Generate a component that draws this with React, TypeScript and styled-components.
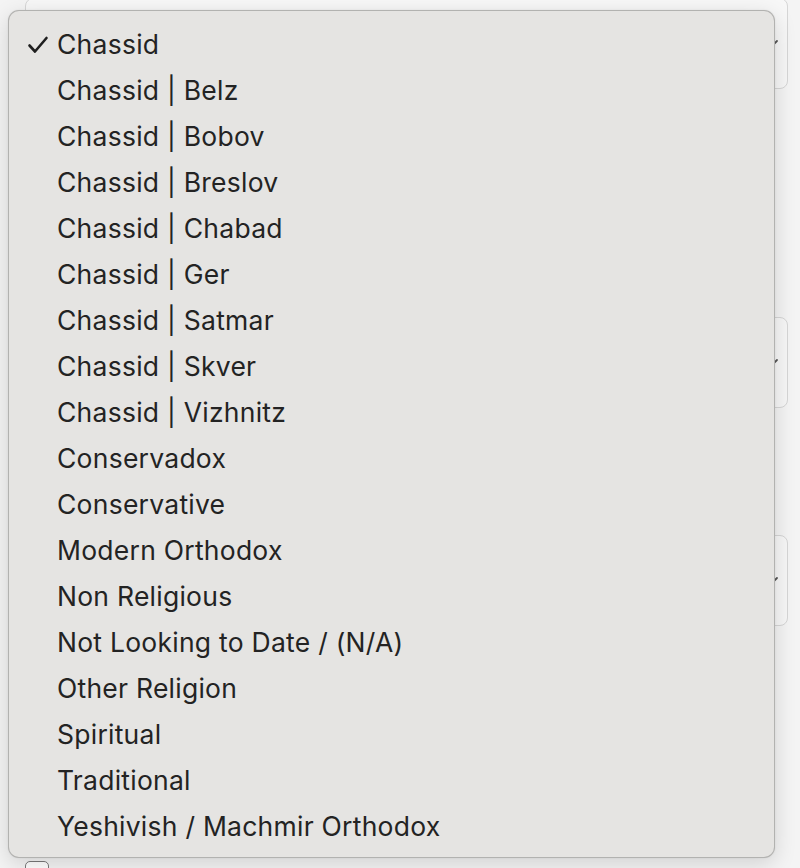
import React from 'react';
import styled, { createGlobalStyle } from 'styled-components';

const GlobalStyle = createGlobalStyle`
  html, body {
    margin: 0;
    padding: 0;
    background: #f4f4f4;
  }
  body {
    font-family: Inter, "Liberation Sans", Arial, sans-serif;
  }
`;

const Page = styled.div`
  position: relative;
  width: 800px;
  height: 868px;
  overflow: hidden;
`;

const Form = styled.div`
  display: flex;
  flex-direction: column;
  padding: 0 12px 0 25px;
  margin-top: -2px;
`;

const Field = styled.div<{ gapTop: number }>`
  margin-top: ${({ gapTop }) => gapTop}px;
`;

const SelectBox = styled.div`
  height: 91px;
  box-sizing: border-box;
  border: 1px solid #d6d6d6;
  border-radius: 8px;
  background: #f7f7f7;
  display: flex;
  align-items: center;
  justify-content: flex-end;
  padding-right: 8px;
  color: #555;
`;

const Checkbox = styled.div`
  width: 22px;
  height: 22px;
  border: 1.5px solid #7a7a7a;
  border-radius: 5px;
  background: #fff;
`;

const Menu = styled.ul`
  position: absolute;
  left: 8px;
  top: 10px;
  width: 767px;
  height: 848px;
  box-sizing: border-box;
  margin: 0;
  padding: 10px 0 0 0;
  list-style: none;
  background: #e5e4e2;
  border: 1px solid rgba(0, 0, 0, 0.22);
  border-radius: 11px;
  box-shadow: 0 6px 22px rgba(0, 0, 0, 0.14), 0 0 2px rgba(0, 0, 0, 0.08);
`;

const Item = styled.li`
  height: 46px;
  display: flex;
  align-items: center;
  padding-left: 48px;
  position: relative;
  font-size: 26.5px;
  letter-spacing: 0.25px;
  color: #232323;
`;

const Check = styled.svg`
  position: absolute;
  left: 18px;
  top: 15px;
`;

const Chevron = () => (
  <svg width="16" height="10" viewBox="0 0 16 10">
    <path d="M2 2 L8 8 L14 2" fill="none" stroke="#555" strokeWidth="1.8" strokeLinecap="round" />
  </svg>
);

const options = [
  'Chassid',
  'Chassid | Belz',
  'Chassid | Bobov',
  'Chassid | Breslov',
  'Chassid | Chabad',
  'Chassid | Ger',
  'Chassid | Satmar',
  'Chassid | Skver',
  'Chassid | Vizhnitz',
  'Conservadox',
  'Conservative',
  'Modern Orthodox',
  'Non Religious',
  'Not Looking to Date / (N/A)',
  'Other Religion',
  'Spiritual',
  'Traditional',
  'Yeshivish / Machmir Orthodox',
];

const App = () => {
  const selected = 'Chassid';
  return (
    <Page>
      <GlobalStyle />
      <Form>
        <Field gapTop={0}>
          <SelectBox><Chevron /></SelectBox>
        </Field>
        <Field gapTop={228}>
          <SelectBox><Chevron /></SelectBox>
        </Field>
        <Field gapTop={127}>
          <SelectBox><Chevron /></SelectBox>
        </Field>
        <Field gapTop={235}>
          <Checkbox />
        </Field>
      </Form>
      <Menu>
        {options.map((o) => (
          <Item key={o}>
            {o === selected && (
              <Check width="22" height="18" viewBox="0 0 22 18">
                <path d="M2.5 9.5 L8 15.5 L19.5 2" fill="none" stroke="#1f1f1f" strokeWidth="2.6" strokeLinecap="round" strokeLinejoin="round" />
              </Check>
            )}
            {o}
          </Item>
        ))}
      </Menu>
    </Page>
  );
};

export default App;
